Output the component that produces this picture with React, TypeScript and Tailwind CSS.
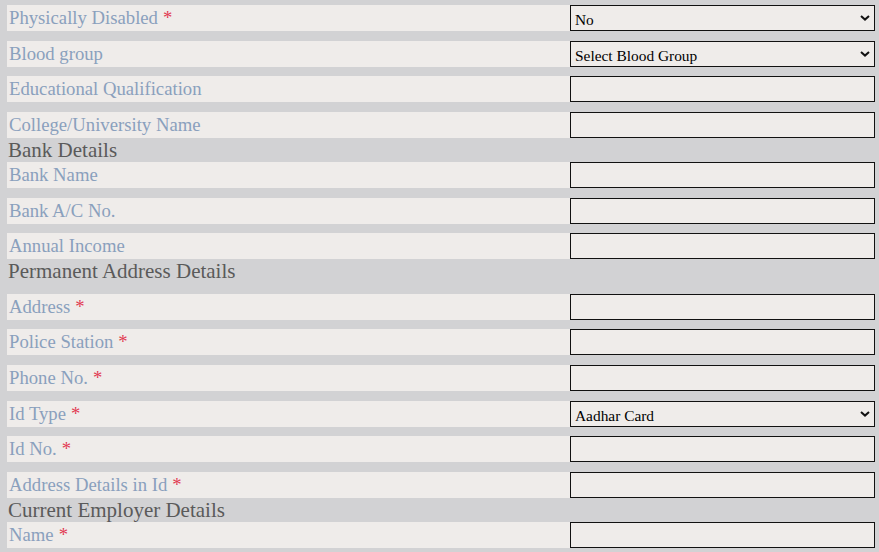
import React from 'react';

type Row =
  | { kind: 'field'; label: string; req?: boolean; select?: string; gap: string }
  | { kind: 'head'; title: string; h: string };

const ROWS: Row[] = [
  { kind: 'field', label: 'Physically Disabled', req: true, select: 'No', gap: 'mt-[5px]' },
  { kind: 'field', label: 'Blood group', select: 'Select Blood Group', gap: 'mt-[10px]' },
  { kind: 'field', label: 'Educational Qualification', gap: 'mt-[9px]' },
  { kind: 'field', label: 'College/University Name', gap: 'mt-[10px]' },
  { kind: 'head', title: 'Bank Details', h: 'h-[24px]' },
  { kind: 'field', label: 'Bank Name', gap: 'mt-0' },
  { kind: 'field', label: 'Bank A/C No.', gap: 'mt-[10px]' },
  { kind: 'field', label: 'Annual Income', gap: 'mt-[9px]' },
  { kind: 'head', title: 'Permanent Address Details', h: 'h-[35px]' },
  { kind: 'field', label: 'Address', req: true, gap: 'mt-0' },
  { kind: 'field', label: 'Police Station', req: true, gap: 'mt-[9px]' },
  { kind: 'field', label: 'Phone No.', req: true, gap: 'mt-[10px]' },
  { kind: 'field', label: 'Id Type', req: true, select: 'Aadhar Card', gap: 'mt-[10px]' },
  { kind: 'field', label: 'Id No.', req: true, gap: 'mt-[9px]' },
  { kind: 'field', label: 'Address Details in Id', req: true, gap: 'mt-[10px]' },
  { kind: 'head', title: 'Current Employer Details', h: 'h-[24px]' },
  { kind: 'field', label: 'Name', req: true, gap: 'mt-0' },
];

function Chevron() {
  return (
    <svg width="10" height="6" viewBox="0 0 10 6" className="pointer-events-none absolute right-[5px] top-1/2 -translate-y-1/2">
      <path d="M1 1l4 3.6L9 1" fill="none" stroke="#111" strokeWidth="2" />
    </svg>
  );
}

export default function App() {
  return (
    <div className="h-[552px] w-[879px] overflow-hidden bg-[#d2d2d4] font-['Liberation_Serif','Times_New_Roman',serif]">
      <div className="flex flex-col">
        {ROWS.map((r, i) => {
          if (r.kind === 'head') {
            return (
              <div key={i} className={`${r.h} pl-[8px] text-[21px] leading-[24px] text-[#5a5a5a]`}>{r.title}</div>
            );
          }
          return (
            <div key={i} className={`${r.gap} flex h-[26px] items-stretch`}>
              <div className="ml-[7px] flex w-[563px] items-center bg-[#efecea] pl-[2px] text-[18.7px] text-[#8aa0bd]">
                <span>{r.label}</span>
                {r.req && <span className="ml-[5px] text-[#e23a52]">*</span>}
              </div>
              <div className="relative w-[305px]">
                {r.select ? (
                  <>
                    <select
                      defaultValue={r.select}
                      className="h-[26px] w-full appearance-none border border-[#111] bg-[#efecea] pl-[4px] pt-[2px] font-['Liberation_Serif','Times_New_Roman',serif] text-[15.4px] text-black outline-none"
                    >
                      <option>{r.select}</option>
                    </select>
                    <Chevron />
                  </>
                ) : (
                  <input className="h-[26px] w-full border border-[#111] bg-[#efecea] outline-none" />
                )}
              </div>
            </div>
          );
        })}
      </div>
    </div>
  );
}
